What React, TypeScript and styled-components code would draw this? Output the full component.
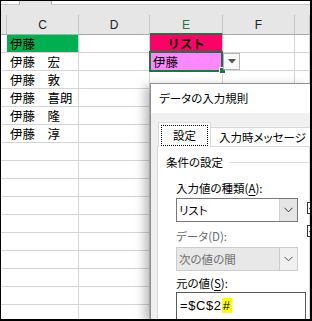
import React from "react";
import styled, { createGlobalStyle } from "styled-components";

const GlobalStyle = createGlobalStyle`
  html, body {
    margin: 0;
    padding: 0;
    background: #fff;
  }
`;

const COLS = "6px 72px 71px 73px 72px 1fr";
const JP = `"Noto Sans CJK JP", "Noto Sans", sans-serif`;
const GREEN = "#217346";

const Frame = styled.div`
  position: relative;
  width: 312px;
  height: 321px;
  box-sizing: border-box;
  border: 1px solid #000;
  border-right-width: 2px;
  border-bottom-width: 2px;
  overflow: hidden;
  background: #e6e6e6;
  font-family: ${JP};
`;

const TopStrip = styled.div`
  display: flex;
  height: 4px;
  margin-bottom: 10px;
`;

const NameBox = styled.div`
  width: 18px;
  background: #fff;
  border-bottom: 1px solid #c6c6c6;
  border-right: 1px solid #b0b0b0;
`;

const FormulaBox = styled.div`
  flex: 1;
  margin-left: 31px;
  background: #fff;
  border-left: 1px solid #b0b0b0;
  border-bottom: 1px solid #c6c6c6;
`;

const HeaderRow = styled.div`
  display: grid;
  grid-template-columns: ${COLS};
  height: 20px;
`;

const ColHead = styled.div<{ $active?: boolean }>`
  box-sizing: border-box;
  height: 20px;
  border-right: 1px solid #c6c6c6;
  border-bottom: ${({ $active }) => ($active ? `2px solid ${GREEN}` : "1px solid #ababab")};
  color: ${({ $active }) => ($active ? GREEN : "#222")};
  font-family: "Liberation Sans", Arial, sans-serif;
  font-size: 12px;
  line-height: 20px;
  text-align: center;
`;

const Body = styled.div`
  position: relative;
  display: grid;
  grid-template-columns: ${COLS};
  background: #fff;
`;

const Cell = styled.div<{ $fill?: string; $bold?: boolean; $center?: boolean }>`
  box-sizing: border-box;
  height: 18px;
  padding: 0 3px;
  border-right: 1px solid #d4d4d4;
  border-bottom: 1px solid #d4d4d4;
  background: ${({ $fill }) => $fill || "#fff"};
  font-size: 12.5px;
  font-weight: ${({ $bold }) => ($bold ? 700 : 400)};
  line-height: 17px;
  text-align: ${({ $center }) => ($center ? "center" : "left")};
  color: #000;
  white-space: nowrap;
  overflow: hidden;
`;

const Selection = styled.div`
  position: absolute;
  left: 148px;
  top: 16px;
  width: 74px;
  height: 21px;
  box-sizing: border-box;
  border: 2px solid ${GREEN};
`;

const Handle = styled.div`
  position: absolute;
  left: 219px;
  top: 33px;
  width: 5px;
  height: 5px;
  background: ${GREEN};
  box-shadow: 0 0 0 1px #fff;
`;

const ListButton = styled.div`
  position: absolute;
  left: 222px;
  top: 18px;
  width: 17px;
  height: 17px;
  box-sizing: border-box;
  border: 1px solid #b4b4b4;
  background: #f9f9f9;
  display: flex;
  align-items: center;
  justify-content: center;
`;

const Dialog = styled.div`
  position: absolute;
  left: 149px;
  top: 82px;
  right: 0;
  bottom: 0;
  display: flex;
  flex-direction: column;
  border-left: 1px solid #8f8f8f;
  border-top: 1px solid #8f8f8f;
  background: #f0f0f0;
  box-shadow: -5px 3px 10px rgba(0, 0, 0, 0.28);
  font-size: 11.5px;
  font-feature-settings: "palt";
`;

const TitleBar = styled.div`
  height: 29px;
  padding-left: 8px;
  background: #fff;
  line-height: 29px;
  color: #000;
  white-space: nowrap;
`;

const DialogBody = styled.div`
  flex: 1;
  padding: 9px 0 0 6px;
`;

const Tabs = styled.div`
  display: flex;
  align-items: flex-end;
  padding-left: 1px;
  margin-bottom: -1px;
  position: relative;
`;

const Tab = styled.div<{ $selected?: boolean }>`
  flex-shrink: 0;
  box-sizing: border-box;
  height: ${({ $selected }) => ($selected ? "25px" : "20px")};
  padding: ${({ $selected }) => ($selected ? "2px" : "0 8px")};
  border: 1px solid #d9d9d9;
  border-bottom: ${({ $selected }) => ($selected ? "none" : "1px solid #d9d9d9")};
  border-left: ${({ $selected }) => ($selected ? "1px solid #d9d9d9" : "none")};
  background: #fff;
  line-height: 18px;
  color: #000;
  white-space: nowrap;
`;

const FocusRing = styled.div`
  box-sizing: border-box;
  height: 21px;
  padding: 0 11px;
  border: 1px dotted #000;
  line-height: 19px;
`;

const Panel = styled.div`
  height: 100%;
  padding: 7px 0 0 8px;
  border: 1px solid #d9d9d9;
  background: #fff;
`;

const GroupLabel = styled.div`
  display: flex;
  align-items: center;
  gap: 6px;
  height: 16px;
  color: #000;
  white-space: nowrap;

  &::after {
    content: "";
    flex: 1;
    border-top: 1px solid #dcdcdc;
  }
`;

const FieldGrid = styled.div`
  display: grid;
  grid-template-columns: 122px auto;
  column-gap: 9px;
  margin: 10px 0 0 10px;
`;

const Fields = styled.div`
  display: flex;
  flex-direction: column;
`;

const Label = styled.div<{ $disabled?: boolean; $gap?: number }>`
  height: 16px;
  line-height: 16px;
  margin-top: ${({ $gap }) => $gap || 0}px;
  color: ${({ $disabled }) => ($disabled ? "#6d6d6d" : "#000")};
  white-space: nowrap;

  u {
    text-underline-offset: 2px;
  }
`;

const Select = styled.div<{ $disabled?: boolean; $gap?: number }>`
  display: flex;
  box-sizing: border-box;
  height: 24px;
  margin-top: ${({ $gap }) => $gap || 0}px;
  border: 1px solid ${({ $disabled }) => ($disabled ? "#cccccc" : "#7a7a7a")};
  background: ${({ $disabled }) => ($disabled ? "#e8e8e8" : "#fff")};
  color: ${({ $disabled }) => ($disabled ? "#6d6d6d" : "#000")};
`;

const SelectText = styled.div`
  flex: 1;
  padding-left: 2px;
  line-height: 22px;
  white-space: nowrap;
`;

const SelectButton = styled.div<{ $disabled?: boolean }>`
  width: 17px;
  display: flex;
  align-items: center;
  justify-content: center;
  border-left: 1px solid ${({ $disabled }) => ($disabled ? "#cccccc" : "#d0d0d0")};
  background: ${({ $disabled }) => ($disabled ? "#f0f0f0" : "#e5e5e5")};
`;

const Source = styled.div`
  box-sizing: border-box;
  width: 130px;
  height: 30px;
  margin-top: 1px;
  padding: 4px 0 0 3px;
  border: 1px solid #5a5a5a;
  font-family: "Liberation Sans", Arial, sans-serif;
  font-size: 13px;
  letter-spacing: 0.6px;
  line-height: 17px;
  color: #000;
  white-space: nowrap;
`;

const Caret = styled.span`
  background: #ffff00;
  padding: 0 1px;
`;

const Checks = styled.div`
  display: flex;
  flex-direction: column;
  gap: 11px;
  padding-top: 22px;
`;

const CheckBox = styled.div`
  box-sizing: border-box;
  width: 12px;
  height: 12px;
  border: 1px solid #333;
  background: #fff;
  display: flex;
  align-items: center;
  justify-content: center;
`;

const Chevron = ({ color = "#333" }: { color?: string }) => (
  <svg width="9" height="6" viewBox="0 0 9 6">
    <path d="M0.5 0.8 L4.5 4.8 L8.5 0.8" fill="none" stroke={color} strokeWidth="1" />
  </svg>
);

const Check = () => (
  <svg width="10" height="10" viewBox="0 0 10 10">
    <path d="M1.5 5 L4 7.5 L8.5 2" fill="none" stroke="#222" strokeWidth="1.3" />
  </svg>
);

type Row = { c?: string; e?: string; cFill?: string; eFill?: string; eBold?: boolean; eCenter?: boolean };

const rows: Row[] = [
  { c: "伊藤", cFill: "#00b050", e: "リスト", eFill: "#ff0066", eBold: true, eCenter: true },
  { c: "伊藤　宏", e: "伊藤", eFill: "#ff88ff" },
  { c: "伊藤　敦" },
  { c: "伊藤　喜朗" },
  { c: "伊藤　隆" },
  { c: "伊藤　淳" },
  ...Array.from({ length: 10 }, () => ({})),
];

export default function App() {
  return (
    <>
      <GlobalStyle />
      <Frame>
        <TopStrip>
          <NameBox />
          <FormulaBox />
        </TopStrip>
        <HeaderRow>
          <ColHead />
          <ColHead>C</ColHead>
          <ColHead>D</ColHead>
          <ColHead $active>E</ColHead>
          <ColHead>F</ColHead>
          <ColHead />
        </HeaderRow>
        <Body>
          {rows.map((r, i) => (
            <React.Fragment key={i}>
              <Cell />
              <Cell $fill={r.cFill}>{r.c}</Cell>
              <Cell />
              <Cell $fill={r.eFill} $bold={r.eBold} $center={r.eCenter}>
                {r.e}
              </Cell>
              <Cell />
              <Cell />
            </React.Fragment>
          ))}
          <Selection />
          <Handle />
          <ListButton>
            <svg width="8" height="5" viewBox="0 0 8 5">
              <path d="M0 0 H8 L4 4.5 Z" fill="#555" />
            </svg>
          </ListButton>
        </Body>

        <Dialog>
          <TitleBar>データの入力規則</TitleBar>
          <DialogBody>
            <Tabs>
              <Tab $selected>
                <FocusRing>設定</FocusRing>
              </Tab>
              <Tab>入力時メッセージ</Tab>
            </Tabs>
            <Panel>
              <GroupLabel>条件の設定</GroupLabel>
              <FieldGrid>
                <Fields>
                  <Label>
                    入力値の種類(<u>A</u>):
                  </Label>
                  <Select $gap={2}>
                    <SelectText>リスト</SelectText>
                    <SelectButton>
                      <Chevron />
                    </SelectButton>
                  </Select>
                  <Label $disabled $gap={6}>
                    データ(D):
                  </Label>
                  <Select $disabled $gap={3}>
                    <SelectText>次の値の間</SelectText>
                    <SelectButton $disabled>
                      <Chevron color="#555" />
                    </SelectButton>
                  </Select>
                  <Label $gap={4}>
                    元の値(<u>S</u>):
                  </Label>
                  <Source>
                    =$C$2<Caret>#</Caret>
                  </Source>
                </Fields>
                <Checks>
                  <CheckBox>
                    <Check />
                  </CheckBox>
                  <CheckBox>
                    <Check />
                  </CheckBox>
                </Checks>
              </FieldGrid>
            </Panel>
          </DialogBody>
        </Dialog>
      </Frame>
    </>
  );
}
